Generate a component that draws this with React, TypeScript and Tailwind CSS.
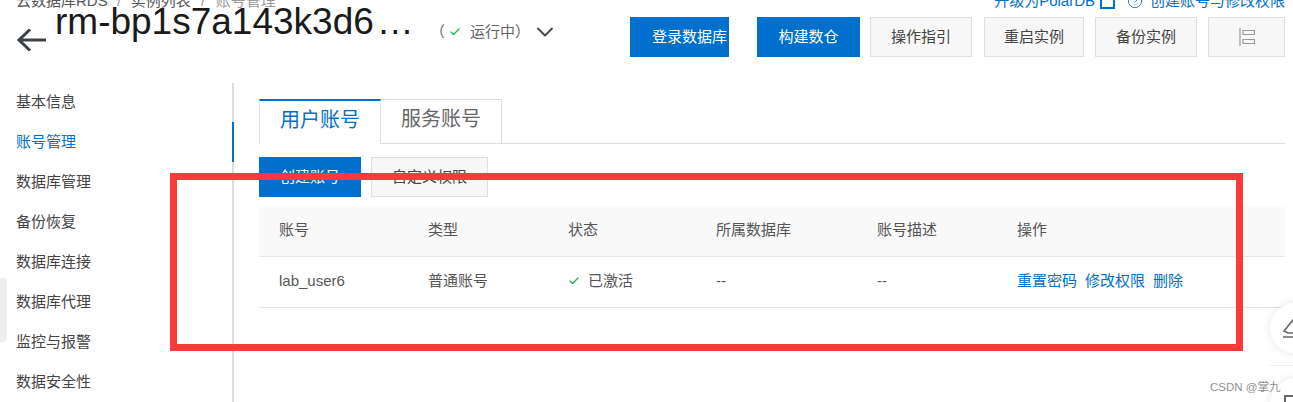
import { Check, ChevronDown, CircleHelp } from 'lucide-react';

const font = { fontFamily: '"Liberation Sans", "Noto Sans CJK SC", sans-serif' };

const sideItems = ['基本信息', '账号管理', '数据库管理', '备份恢复', '数据库连接', '数据库代理', '监控与报警', '数据安全性'];

const actions = [
  { label: '登录数据库', box: 'w-[99px] pl-[20px]', primary: true },
  { label: '构建数仓', box: 'w-[103px] ml-[28px]', primary: true },
  { label: '操作指引', box: 'w-[102px] ml-[10px]' },
  { label: '重启实例', box: 'w-[100px] ml-[12px]' },
  { label: '备份实例', box: 'w-[102px] ml-[11px]' },
];

const columns = ['w-[149px]', 'w-[140px]', 'w-[148px]', 'w-[161px]', 'w-[140px]', 'flex-1'];
const headers = ['账号', '类型', '状态', '所属数据库', '账号描述', '操作'];

function Annotation() {
  return <div className="absolute left-[170px] top-[173px] w-[1073px] h-[178px] border-[7px] border-[#fb3a3a]" />;
}

function Header() {
  return (
    <header className="flex-shrink-0">
      <div className="h-[24px] -mt-[7px] pl-4 pr-2 flex items-start justify-between text-[15px] leading-[16px] text-[#555]">
        <div className="flex">
          <span>云数据库RDS</span>
          <span className="w-[23px] text-center text-[#999]">/</span>
          <span>实例列表</span>
          <span className="w-[25px] text-center text-[#999]">/</span>
          <span className="text-[#999]">账号管理</span>
        </div>
        <div className="flex items-center h-4 text-[#0070cc]">
          <span>升级为PolarDB</span>
          <svg viewBox="0 0 15 15" className="h-[15px] w-[15px] ml-[5px]" fill="none" stroke="currentColor" strokeWidth="2">
            <path d="M1 1h13v13H1z" />
          </svg>
          <CircleHelp className="h-4 w-4 ml-3 mr-[7px]" strokeWidth={1.25} />
          <span>创建账号与修改权限</span>
        </div>
      </div>
      <div className="flex pr-2 h-10">
        <svg viewBox="0 0 30 24" className="ml-4 mt-[11px] h-6 w-[30px] flex-shrink-0 text-[#3a4248]" fill="none" stroke="currentColor" strokeWidth="3">
          <path d="M30 12H3M14 1.5 3 12l11 10.5" />
        </svg>
        <h1 className="ml-[9px] -mt-[17px] w-[375px] flex-shrink-0 text-[37px] leading-[44px] text-[#1a1a1a]">
          rm-bp1s7a143k3d6<span className="ml-[3px]">…</span>
        </h1>
        <div className="h-[30px] flex items-center text-[15px] text-[#666]">
          <span>（</span>
          <Check className="h-3 w-3 text-[#22b34c] ml-[4px] mr-[9px]" strokeWidth={2.5} />
          <span>运行中</span>
          <span>）</span>
          <ChevronDown className="h-7 w-7 ml-px text-[#444]" strokeWidth={1.6} />
        </div>
        <div className="ml-auto flex">
          {actions.map((a) => (
            <button
              key={a.label}
              className={`${a.box} h-10 border text-[15px] ${
                a.primary ? 'bg-[#0070cc] border-[#0070cc] text-white' : 'bg-[#f7f7f7] border-[#dfdfdf] text-[#444]'
              }`}
            >
              {a.label}
            </button>
          ))}
          <button className="ml-[11px] w-[77px] h-10 border bg-[#f7f7f7] border-[#dfdfdf] flex items-center justify-center">
            <svg viewBox="0 0 16 18" className="h-[18px] w-4 text-[#999]" fill="none" stroke="currentColor" strokeWidth="1.2">
              <path d="M1 0v18M4 2.5h11.5v4H4zM4 11.5h11.5v4H4z" />
            </svg>
          </button>
        </div>
      </div>
    </header>
  );
}

function Sidebar() {
  return (
    <aside className="w-[234px] flex-shrink-0 border-r-2 border-[#dcdcdc]">
      <nav className="-mt-px text-[15px] leading-10 text-[#444]">
        {sideItems.map((label, i) => (
          <div key={label} className={`pl-4 h-10 -mr-0.5 ${i === 1 ? 'text-[#0070cc] border-r-2 border-[#0070cc]' : ''}`}>
            {label}
          </div>
        ))}
      </nav>
    </aside>
  );
}

function AccountTable() {
  return (
    <div className="mt-[10px] text-[15px] text-[#555]">
      <div className="flex items-center h-[50px] pb-[2px] bg-[#f9f9f9] border-b border-[#e8e8e8] pl-5">
        {headers.map((h, i) => (
          <div key={h} className={columns[i]}>{h}</div>
        ))}
      </div>
      <div className="flex items-center h-[51px] pb-[2px] border-b border-[#e5e5e5] pl-5">
        <div className={columns[0]}>lab_user6</div>
        <div className={columns[1]}>普通账号</div>
        <div className={`${columns[2]} flex items-center`}>
          <Check className="h-3 w-3 text-[#22b34c] mr-2" strokeWidth={2.5} />
          已激活
        </div>
        <div className={columns[3]}>--</div>
        <div className={columns[4]}>--</div>
        <div className={`${columns[5]} flex gap-2 text-[#0070cc]`}>
          <span>重置密码</span>
          <span>修改权限</span>
          <span>删除</span>
        </div>
      </div>
    </div>
  );
}

export default function App() {
  return (
    <div className="relative w-[1293px] h-[402px] overflow-hidden bg-white flex flex-col" style={font}>
      <Header />
      <div className="flex flex-1 mt-[26px] min-h-0">
        <Sidebar />
        <main className="flex-1 pl-[25px] pr-2 pt-4">
          <div className="flex h-[45px] border-b border-[#dedede] text-[20px]">
            <div className="w-[122px] h-[45px] pb-[5px] bg-white border-t-2 border-[#0070cc] border-l border-r border-l-[#dedede] border-r-[#dedede] flex items-center justify-center text-[#0070cc]">用户账号</div>
            <div className="w-[121px] h-[44px] pb-[5px] border-t border-r border-[#dedede] bg-white flex items-center justify-center text-[#666]">服务账号</div>
          </div>
          <div className="flex gap-[10px] mt-[13px]">
            <button className="w-[102px] h-10 bg-[#0070cc] text-white text-[15px]">创建账号</button>
            <button className="w-[117px] h-10 bg-[#f7f7f7] border border-[#dfdfdf] text-[#444] text-[15px]">自定义权限</button>
          </div>
          <AccountTable />
        </main>
      </div>

      <div className="absolute left-0 top-[278px] w-[7px] h-[64px] rounded-r-sm bg-[#eeeeee]" />
      <div className="absolute left-[1270px] top-[303px] w-[54px] h-[50px] rounded-full bg-white shadow-[0_0_10px_rgba(0,0,0,0.1)] flex items-center pl-[13px]">
        <svg viewBox="0 0 20 20" className="h-5 w-5 text-[#666]" fill="none" stroke="currentColor" strokeWidth="1.6"><path d="M0 19h20M1 13 10 2l8 7-8 6H5z" /></svg>
      </div>
      <div className="absolute left-[1270px] top-[365px] w-[23px] h-px bg-[#eeeeee]" />
      <div className="absolute left-[1270px] top-[378px] w-[54px] h-[54px] rounded-full bg-white shadow-[0_0_10px_rgba(0,0,0,0.1)] flex items-start pl-[14px] pt-[17px]">
        <div className="h-3 w-3 border-2 border-[#666]" />
      </div>
      <div className="absolute left-[1210px] top-[380px] text-[11.5px] leading-[14px] text-[#8f8f8f]">CSDN @掌九</div>
      <Annotation />
    </div>
  );
}
